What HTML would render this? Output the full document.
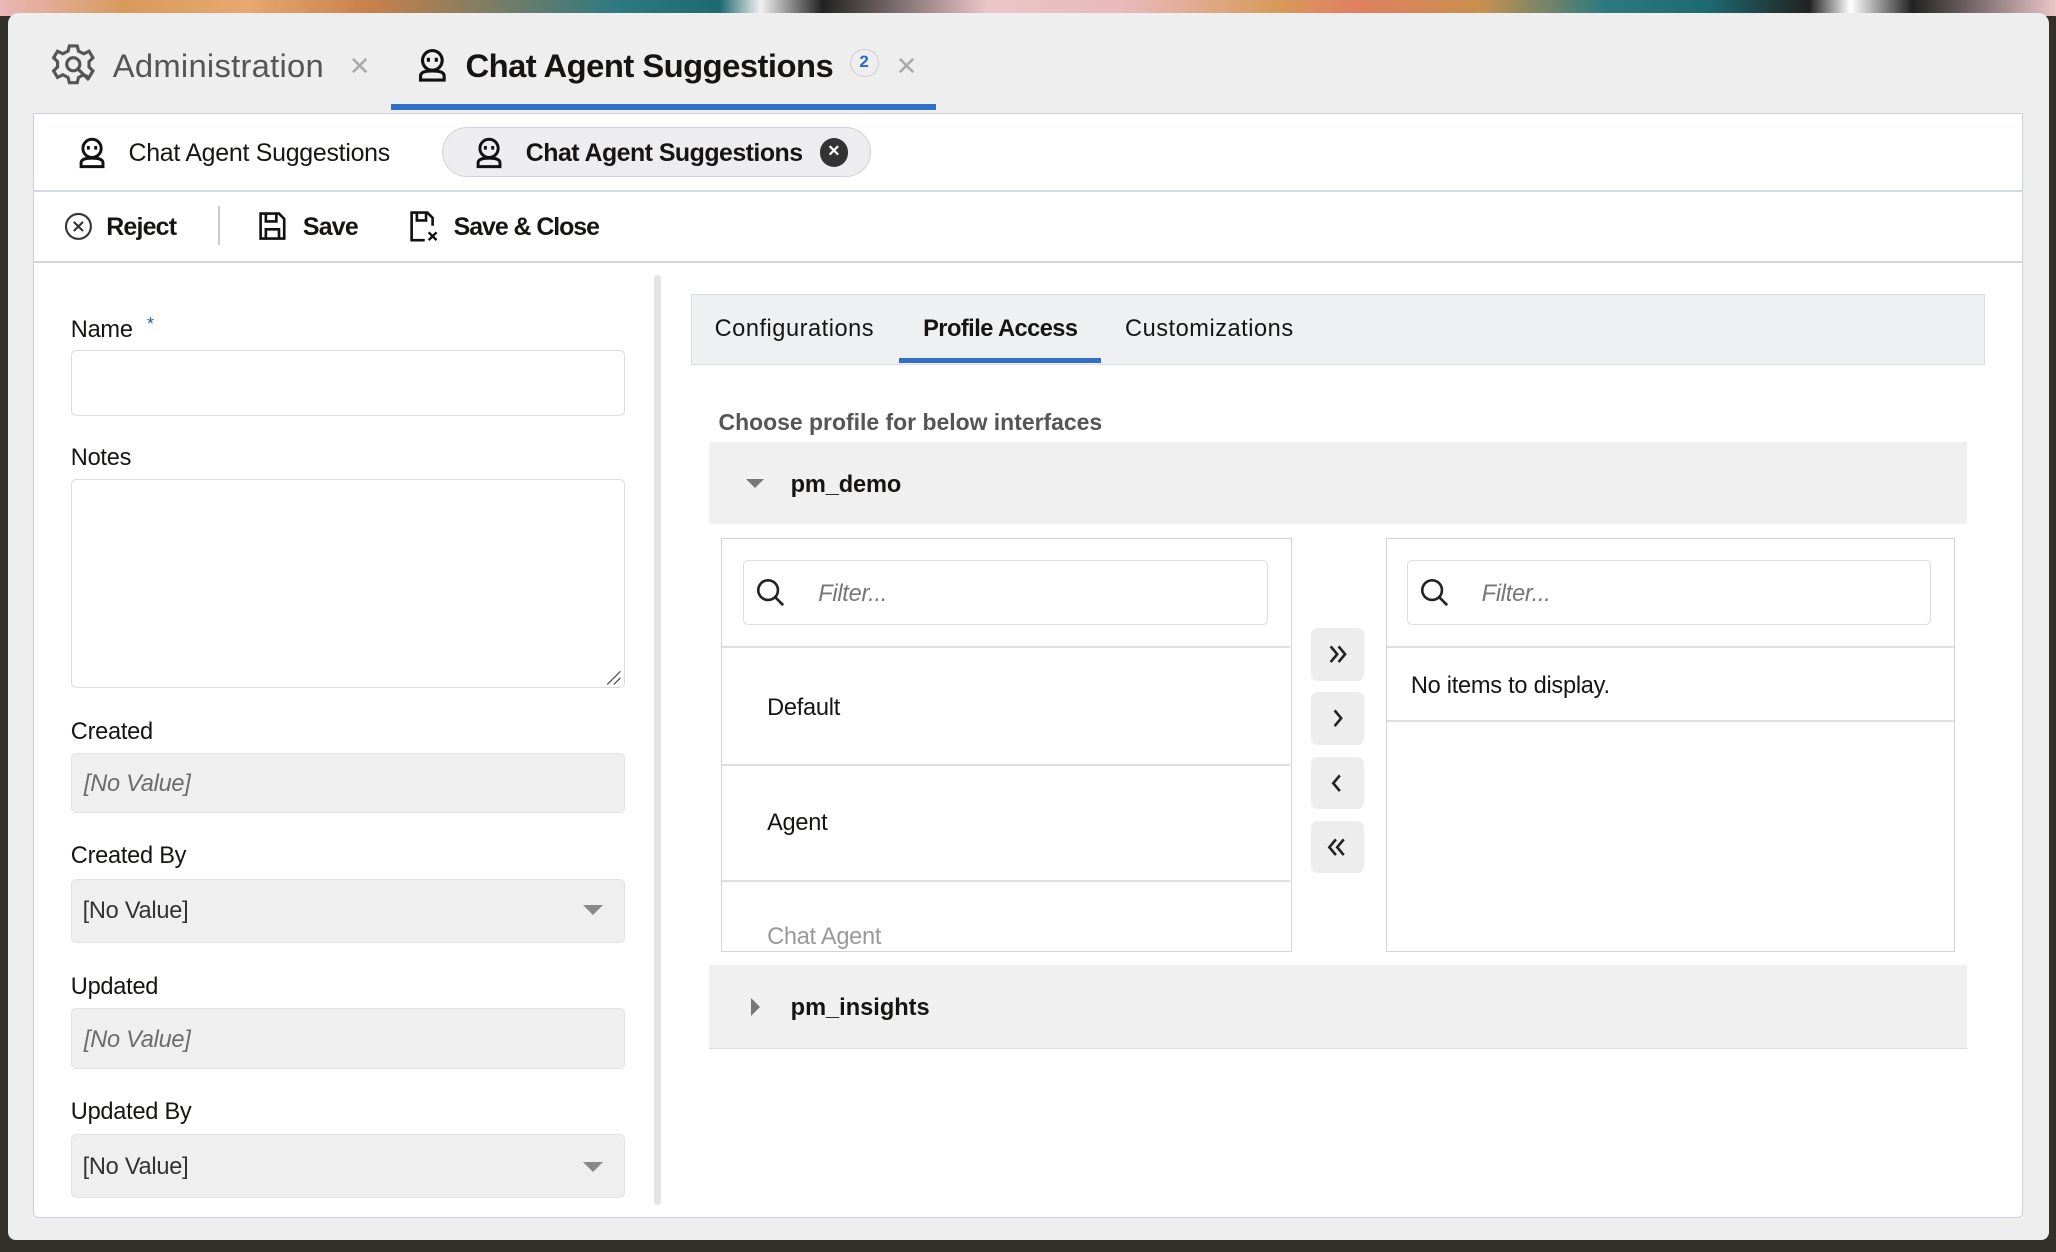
<!DOCTYPE html>
<html><head><meta charset="utf-8"><style>
html,body{margin:0;padding:0;}
body{width:1568px;height:955px;zoom:1.31122;background:#332f2b;position:relative;overflow:hidden;font-family:"Liberation Sans",sans-serif;color:#161513;}
.a{position:absolute;}
.t{position:absolute;white-space:nowrap;line-height:30px;font-size:18px;letter-spacing:-0.2px;margin-top:1.5px;}
.inp{position:absolute;border:1.5px solid #dcdcdc;border-radius:4px;background:#fff;box-sizing:border-box;}
.ro{position:absolute;background:#efeff0;border:1px solid #e2e2e2;border-radius:4px;box-sizing:border-box;}
.hl{position:absolute;height:1.5px;background:#dedede;}
.btn{position:absolute;left:1000px;width:40px;height:40px;background:#ededed;border-radius:5px;}
</style></head><body>
<div class="a" style="left:0;top:0;width:1568px;height:12px;background:linear-gradient(90deg,#e9b7b8 0,#d89a5c 6%,#e8a870 12%,#c8804a 18%,#2d7a80 30%,#1d6a70 35%,#f0f0f0 37%,#222 40%,#eac7c9 48%,#e8b8b8 55%,#d89a5c 62%,#e08060 66%,#c9904f 72%,#2d7a80 78%,#1d6a70 83%,#222 88%,#fff 90%,#222 93%,#eac7c9 100%);"></div>
<div class="a" style="left:6px;top:10px;width:1557px;height:936px;background:#eeeeee;border-radius:8px 8px 6px 6px;"></div>
<svg class="a" style="left:39px;top:32px" width="34" height="34" viewBox="0 0 34 34" fill="none" stroke="#555" stroke-width="2.4"><path d="M14 3h6l1 4 4 2 4-2 3 5-3 3v4l3 3-3 5-4-2-4 2-1 4h-6l-1-4-4-2-4 2-3-5 3-3v-4l-3-3 3-5 4 2 4-2z"/><circle cx="17" cy="17" r="5"/><path d="M20 20l9 9"/></svg>
<div class="t" style="left:86px;top:33px;font-size:25px;color:#555;line-height:32px;letter-spacing:0.2px;">Administration</div>
<div class="t" style="left:266px;top:34px;font-size:20px;color:#aaa;">✕</div>
<svg class="a" style="left:316px;top:35px" width="28" height="28" viewBox="0 0 28 28" fill="none" stroke="#111" stroke-width="2.4"><circle cx="14" cy="11" r="7.5"/><path d="M11 9v3M17 9v3"/><path d="M5 26v-3c0-3 3-4 9-4s9 1 9 4v3z"/></svg>
<div class="t" style="left:355px;top:33px;font-size:25px;font-weight:bold;line-height:32px;letter-spacing:-0.4px;">Chat Agent Suggestions</div>
<div class="a" style="left:648px;top:37px;width:22px;height:22px;border:1.5px solid #ccc;border-radius:50%;font-size:13px;font-weight:bold;color:#2a6ac8;text-align:center;box-sizing:border-box;line-height:19px;">2</div>
<div class="t" style="left:683px;top:34px;font-size:20px;color:#aaa;">✕</div>
<div class="a" style="left:298px;top:79px;width:416px;height:5px;background:#2f6fc8;"></div>
<div class="a" style="left:25px;top:86px;width:1518px;height:843px;background:#fff;border:1.5px solid #c9d2dc;box-sizing:border-box;border-radius:0 0 4px 4px;"></div>
<svg class="a" style="left:57px;top:103px" width="26" height="26" viewBox="0 0 28 28" fill="none" stroke="#111" stroke-width="2.4"><circle cx="14" cy="11" r="7.5"/><path d="M11 9v3M17 9v3"/><path d="M5 26v-3c0-3 3-4 9-4s9 1 9 4v3z"/></svg>
<div class="t" style="left:98px;top:101px;font-size:19px;">Chat Agent Suggestions</div>
<div class="a" style="left:337px;top:97px;width:327px;height:38px;background:#ededf0;border:1.5px solid #d2d2d2;border-radius:20px;box-sizing:border-box;"></div>
<svg class="a" style="left:360px;top:103px" width="26" height="26" viewBox="0 0 28 28" fill="none" stroke="#111" stroke-width="2.4"><circle cx="14" cy="11" r="7.5"/><path d="M11 9v3M17 9v3"/><path d="M5 26v-3c0-3 3-4 9-4s9 1 9 4v3z"/></svg>
<div class="t" style="left:401px;top:101px;font-size:19px;font-weight:bold;letter-spacing:-0.4px;">Chat Agent Suggestions</div>
<div class="a" style="left:625px;top:105px;width:22px;height:22px;border-radius:50%;background:#333;color:#fff;font-size:12px;font-weight:bold;text-align:center;line-height:22px;">✕</div>
<div class="hl" style="left:26px;top:145px;width:1516px;background:#d3dbe3;"></div>
<svg class="a" style="left:49px;top:162px" width="22" height="22" viewBox="0 0 22 22" fill="none" stroke="#333" stroke-width="1.6"><circle cx="11" cy="11" r="9.5"/><path d="M7.5 7.5l7 7M14.5 7.5l-7 7"/></svg>
<div class="t" style="left:81px;top:157px;font-size:19px;font-weight:bold;letter-spacing:-0.6px;">Reject</div>
<div class="a" style="left:166px;top:157px;width:1.5px;height:30px;background:#ccc;"></div>
<svg class="a" style="left:197px;top:161px" width="22" height="23" viewBox="0 0 22 23" fill="none" stroke="#111" stroke-width="2"><path d="M2 2h14l4 4v15H2z"/><path d="M6 2v6h8V2"/><path d="M6 21v-7h10v7"/></svg>
<div class="t" style="left:231px;top:157px;font-size:19px;font-weight:bold;letter-spacing:-0.6px;">Save</div>
<svg class="a" style="left:312px;top:160px" width="24" height="26" viewBox="0 0 24 26" fill="none" stroke="#111" stroke-width="2"><path d="M12 23H2V2h12l4 4v6"/><path d="M6 2v6h7V2"/><path d="M15 17l6 6M21 17l-6 6" stroke-width="1.8"/></svg>
<div class="t" style="left:346px;top:157px;font-size:19px;font-weight:bold;letter-spacing:-0.8px;">Save &amp; Close</div>
<div class="hl" style="left:26px;top:199px;width:1516px;background:#d5d5d5;"></div>
<div class="t" style="left:54px;top:236px;">Name</div>
<div class="t" style="left:112px;top:230px;font-size:14px;color:#2a6a9a;">*</div>
<div class="inp" style="left:54px;top:267px;width:423px;height:50px;"></div>
<div class="t" style="left:54px;top:333px;">Notes</div>
<div class="inp" style="left:54px;top:365px;width:423px;height:160px;"></div>
<svg class="a" style="left:462px;top:511px" width="12" height="12" viewBox="0 0 12 12" stroke="#555" stroke-width="1"><path d="M11 1L1 11M11 6L6 11"/></svg>
<div class="t" style="left:54px;top:542px;">Created</div>
<div class="ro" style="left:54px;top:574px;width:423px;height:46px;"></div>
<div class="t" style="left:64px;top:582px;font-style:italic;color:#6b6b6b;">[No Value]</div>
<div class="t" style="left:54px;top:637px;">Created By</div>
<div class="ro" style="left:54px;top:670px;width:423px;height:49px;"></div>
<div class="t" style="left:63px;top:679px;color:#333;">[No Value]</div>
<div class="a" style="left:445px;top:690px;width:0;height:0;border-left:8px solid transparent;border-right:8px solid transparent;border-top:8px solid #888;"></div>
<div class="t" style="left:54px;top:737px;">Updated</div>
<div class="ro" style="left:54px;top:769px;width:423px;height:46px;"></div>
<div class="t" style="left:64px;top:777px;font-style:italic;color:#6b6b6b;">[No Value]</div>
<div class="t" style="left:54px;top:832px;">Updated By</div>
<div class="ro" style="left:54px;top:865px;width:423px;height:49px;"></div>
<div class="t" style="left:63px;top:874px;color:#333;">[No Value]</div>
<div class="a" style="left:445px;top:886px;width:0;height:0;border-left:8px solid transparent;border-right:8px solid transparent;border-top:8px solid #888;"></div>
<div class="a" style="left:499px;top:210px;width:5px;height:709px;background:#e3e3e3;border-radius:3px;"></div>
<div class="a" style="left:527px;top:224px;width:987px;height:54px;background:#eef0f2;border:1px solid #d8dde2;box-sizing:border-box;"></div>
<div class="t" style="left:545px;top:235px;letter-spacing:0.4px;">Configurations</div>
<div class="t" style="left:704px;top:235px;font-weight:bold;letter-spacing:-0.4px;">Profile Access</div>
<div class="t" style="left:858px;top:235px;letter-spacing:0.4px;">Customizations</div>
<div class="a" style="left:686px;top:273px;width:154px;height:4px;background:#2f6fc8;"></div>
<div class="t" style="left:548px;top:306px;color:#555;font-weight:bold;font-size:17.5px;letter-spacing:0px;">Choose profile for below interfaces</div>
<div class="a" style="left:541px;top:337px;width:959px;height:63px;background:#f0f0f0;"></div>
<div class="a" style="left:569px;top:365px;width:0;height:0;border-left:7px solid transparent;border-right:7px solid transparent;border-top:7px solid #777;"></div>
<div class="t" style="left:603px;top:354px;font-weight:bold;letter-spacing:-0.1px;">pm_demo</div>
<div class="a" style="left:550px;top:410px;width:435px;height:316px;border:1.5px solid #d4d4d4;box-sizing:border-box;overflow:hidden;background:#fff;"></div>
<div class="inp" style="left:567px;top:427px;width:400px;height:50px;"></div>
<svg class="a" style="left:576px;top:440px" width="24" height="24" viewBox="0 0 24 24" fill="none" stroke="#222" stroke-width="2"><circle cx="10" cy="10" r="7.5"/><path d="M15.5 15.5l6 6"/></svg>
<div class="t" style="left:624px;top:437px;font-style:italic;color:#777;">Filter...</div>
<div class="hl" style="left:551px;top:493px;width:433px;"></div>
<div class="t" style="left:585px;top:524px;">Default</div>
<div class="hl" style="left:551px;top:583px;width:433px;"></div>
<div class="t" style="left:585px;top:612px;">Agent</div>
<div class="hl" style="left:551px;top:671px;width:433px;"></div>
<div class="t" style="left:585px;top:699px;color:#999;">Chat Agent</div>
<div class="btn" style="top:479px;"><svg width="40" height="40" viewBox="0 0 40 40" fill="none" stroke="#222" stroke-width="2"><path d="M15 14l5 6-5 6M21 14l5 6-5 6"/></svg></div>
<div class="btn" style="top:528px;"><svg width="40" height="40" viewBox="0 0 40 40" fill="none" stroke="#222" stroke-width="2"><path d="M18 14l5 6-5 6"/></svg></div>
<div class="btn" style="top:577px;"><svg width="40" height="40" viewBox="0 0 40 40" fill="none" stroke="#222" stroke-width="2"><path d="M22 14l-5 6 5 6"/></svg></div>
<div class="btn" style="top:626px;"><svg width="40" height="40" viewBox="0 0 40 40" fill="none" stroke="#222" stroke-width="2"><path d="M19 14l-5 6 5 6M25 14l-5 6 5 6"/></svg></div>
<div class="a" style="left:1057px;top:410px;width:434px;height:316px;border:1.5px solid #d4d4d4;box-sizing:border-box;background:#fff;"></div>
<div class="inp" style="left:1073px;top:427px;width:400px;height:50px;"></div>
<svg class="a" style="left:1082px;top:440px" width="24" height="24" viewBox="0 0 24 24" fill="none" stroke="#222" stroke-width="2"><circle cx="10" cy="10" r="7.5"/><path d="M15.5 15.5l6 6"/></svg>
<div class="t" style="left:1130px;top:437px;font-style:italic;color:#777;">Filter...</div>
<div class="hl" style="left:1058px;top:493px;width:432px;"></div>
<div class="t" style="left:1076px;top:507px;">No items to display.</div>
<div class="hl" style="left:1058px;top:549px;width:432px;"></div>
<div class="a" style="left:541px;top:736px;width:959px;height:64px;background:#f0f0f0;border-bottom:1.5px solid #ddd;box-sizing:border-box;"></div>
<div class="a" style="left:573px;top:761px;width:0;height:0;border-top:7px solid transparent;border-bottom:7px solid transparent;border-left:7px solid #777;"></div>
<div class="t" style="left:603px;top:753px;font-weight:bold;letter-spacing:0px;">pm_insights</div>
</body></html>
